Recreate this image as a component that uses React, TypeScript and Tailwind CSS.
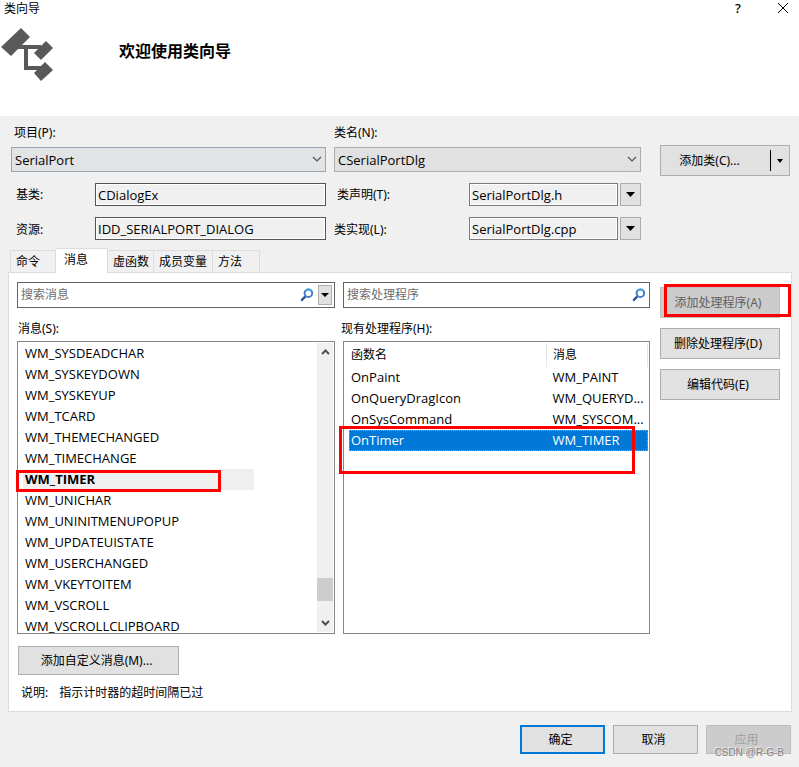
import { useState } from "react";
import type { ReactNode } from "react";

const MESSAGES = [
  "WM_SYSDEADCHAR",
  "WM_SYSKEYDOWN",
  "WM_SYSKEYUP",
  "WM_TCARD",
  "WM_THEMECHANGED",
  "WM_TIMECHANGE",
  "WM_TIMER",
  "WM_UNICHAR",
  "WM_UNINITMENUPOPUP",
  "WM_UPDATEUISTATE",
  "WM_USERCHANGED",
  "WM_VKEYTOITEM",
  "WM_VSCROLL",
  "WM_VSCROLLCLIPBOARD",
];

const HANDLERS = [
  { name: "OnPaint", message: "WM_PAINT" },
  { name: "OnQueryDragIcon", message: "WM_QUERYD..." },
  { name: "OnSysCommand", message: "WM_SYSCOM..." },
  { name: "OnTimer", message: "WM_TIMER" },
];

const TABS = [
  { label: "命令", width: "w-[46px]" },
  { label: "消息", width: "w-[52px]" },
  { label: "虚函数", width: "w-[46px]" },
  { label: "成员变量", width: "w-[59px]" },
  { label: "方法", width: "w-[47px]" },
];

function Triangle() {
  return (
    <svg width="9" height="5" viewBox="0 0 9 5" aria-hidden="true">
      <path d="M0 0h9L4.5 5z" fill="#000" />
    </svg>
  );
}

function SearchIcon() {
  return (
    <svg width="14" height="14" viewBox="0 0 14 14" fill="none" aria-hidden="true">
      <path d="M5.4 8.4 1.2 12.6" stroke="#2f4f96" strokeWidth="2.2" />
      <circle cx="8.4" cy="5.2" r="3.8" stroke="#3f7fc8" strokeWidth="2" />
      <path d="M5.4 2.9a3.8 3.8 0 0 1 6-.1" stroke="#4fa6da" strokeWidth="2" />
    </svg>
  );
}

function Logo() {
  return (
    <svg width="54" height="56" viewBox="0 0 54 56" fill="#58595b" aria-hidden="true">
      <path d="M21 0 30 9 11 28 1 19z" />
      <path d="M46 13 53 20 41 32 34 25z" />
      <path d="M45 34 53 42 41 53 34 45z" />
      <path d="M17 17h24v4H28v17h13v4H24V21h-7z" />
    </svg>
  );
}

function ComboBox({ id, value, className }: { id: string; value: string; className: string }) {
  return (
    <div className="relative mt-[6px]">
      <select
        id={id}
        defaultValue={value}
        className={`block h-[25px] w-full appearance-none border pl-[3px] font-['Open_Sans','Noto_Sans_CJK_SC',sans-serif] text-[13px] leading-4 outline-none ${className}`}
      >
        <option>{value}</option>
      </select>
      <svg
        className="pointer-events-none absolute top-[9px] right-1"
        width="10"
        height="7"
        viewBox="0 0 10 7"
        fill="none"
        stroke="#555"
        aria-hidden="true"
      >
        <path d="M1 1l4 4 4-4" strokeWidth="1.2" />
      </svg>
    </div>
  );
}

function ReadOnlyBox({ id, value, className }: { id: string; value: string; className: string }) {
  return (
    <input
      id={id}
      readOnly
      defaultValue={value}
      className={`h-[23px] min-w-0 border bg-[#f0f0f0] px-[2px] font-['Open_Sans','Noto_Sans_CJK_SC',sans-serif] text-[13px] leading-4 shadow-[inset_0_0_0_1px_#fff] outline-none ${className}`}
    />
  );
}

function DropButton({ label }: { label: string }) {
  return (
    <button
      type="button"
      aria-label={label}
      className="flex h-[23px] w-[21px] items-center justify-center border border-[#adadad] bg-[#e1e1e1]"
    >
      <Triangle />
    </button>
  );
}

function PushButton({
  children,
  className = "border border-[#adadad] bg-[#e1e1e1]",
  disabled,
}: {
  children: ReactNode;
  className?: string;
  disabled?: boolean;
}) {
  return (
    <button type="button" disabled={disabled} className={`flex items-center justify-center pr-1 leading-4 ${className}`}>
      {children}
    </button>
  );
}

function Mark({ className }: { className: string }) {
  return <div className={`pointer-events-none absolute border-[3px] border-[#fe0000] ${className}`} />;
}

export default function ClassWizard() {
  const [tab, setTab] = useState("消息");
  const [message, setMessage] = useState("WM_TIMER");
  const [handler, setHandler] = useState("OnTimer");

  return (
    <div className="min-h-screen bg-[#f0f0f0] font-['Noto_Sans','Noto_Sans_CJK_SC',sans-serif] text-xs leading-4 text-black">
      <header className="h-[116px] bg-white">
        <div className="flex h-4 items-center pr-[10px] pl-1">
          <span className="flex-1 pt-px">类向导</span>
          <button type="button" className="w-4 text-center text-[13px] font-medium leading-4">
            ?
          </button>
          <button type="button" aria-label="关闭" className="ml-[31px]">
            <svg width="12" height="12" viewBox="0 0 12 12" stroke="#000" aria-hidden="true">
              <path d="M1 1l10 10M11 1 1 11" />
            </svg>
          </button>
        </div>
        <div className="flex items-start pt-3">
          <Logo />
          <h1 className="mt-[11px] ml-[65px] text-base leading-6 font-bold">欢迎使用类向导</h1>
        </div>
      </header>

      <main>
        <section className="flex items-start pr-[9px] pl-[11px]">
          <div className="min-w-0 flex-[315] pt-[9px]">
            <label htmlFor="project" className="block pl-[3px]">
              项目(P):
            </label>
            <ComboBox id="project" value="SerialPort" className="border-[#98a5b3] bg-[#e1e3e5]" />
            <div className="mt-[11px] flex items-center">
              <label htmlFor="base" className="w-[84px] pt-px pl-[5px]">
                基类:
              </label>
              <ReadOnlyBox id="base" value="CDialogEx" className="flex-1 border-[#555]" />
            </div>
            <div className="mt-[11px] flex items-center">
              <label htmlFor="resource" className="w-[84px] pt-[2px] pl-[5px]">
                资源:
              </label>
              <ReadOnlyBox id="resource" value="IDD_SERIALPORT_DIALOG" className="flex-1 border-[#555]" />
            </div>
          </div>

          <div className="ml-2 min-w-0 flex-[307] pt-[9px]">
            <label htmlFor="class-name" className="block">
              类名(N):
            </label>
            <ComboBox id="class-name" value="CSerialPortDlg" className="border-[#adadad] bg-[#e1e1e1]" />
            <div className="mt-[11px] flex items-center">
              <label htmlFor="declaration" className="w-[135px] pt-px pl-[3px]">
                类声明(T):
              </label>
              <ReadOnlyBox id="declaration" value="SerialPortDlg.h" className="mr-[2px] flex-1 border-[#7a7a7a]" />
              <DropButton label="类声明" />
            </div>
            <div className="mt-[11px] flex items-center">
              <label htmlFor="implementation" className="w-[135px] pt-[2px]">
                类实现(L):
              </label>
              <ReadOnlyBox
                id="implementation"
                value="SerialPortDlg.cpp"
                className="mr-[2px] flex-1 border-[#7a7a7a]"
              />
              <DropButton label="类实现" />
            </div>
          </div>

          <div className="mt-[29px] ml-[19px] flex h-[31px] w-[130px] items-center border border-[#adadad] bg-[#e1e1e1]">
            <button type="button" className="h-full flex-1 pr-3 text-center">
              添加类(C)...
            </button>
            <button
              type="button"
              aria-label="更多添加类选项"
              className="flex h-[21px] w-[19px] items-center justify-center border-l border-black"
            >
              <svg width="6" height="4" viewBox="0 0 6 4" aria-hidden="true">
                <path d="M0 0h6L3 4z" />
              </svg>
            </button>
          </div>
        </section>

        <div role="tablist" className="mt-2 flex items-end pl-[10px]">
          {TABS.map((t) => (
            <button
              key={t.label}
              type="button"
              role="tab"
              aria-selected={tab === t.label}
              onClick={() => setTab(t.label)}
              className={`${t.width} border-t border-r border-[#dcdcdc] text-left whitespace-nowrap first:border-l ${
                tab === t.label
                  ? "relative z-10 -mb-px h-[25px] bg-white pb-[2px] pl-2"
                  : "h-[22px] pl-[5px]"
              }`}
            >
              {t.label}
            </button>
          ))}
        </div>

        <section className="mr-[7px] ml-2 border border-[#dcdcdc] bg-white pt-[9px] pr-[11px] pb-[10px] pl-2">
          <div className="flex items-start">
            <div className="min-w-0 flex-[318]">
              <div className="flex h-[26px] items-center border border-[#646464] pr-[2px] pl-[3px]">
                <input
                  aria-label="搜索消息"
                  placeholder="搜索消息"
                  className="min-w-0 flex-1 outline-none placeholder:text-[#6d6d6d]"
                />
                <SearchIcon />
                <button
                  type="button"
                  aria-label="搜索选项"
                  className="ml-1 flex h-5 w-[14px] items-center justify-center border border-[#adadad] bg-[#e1e1e1]"
                >
                  <svg width="8" height="4" viewBox="0 0 8 4" aria-hidden="true">
                    <path d="M0 0h8L4 4z" />
                  </svg>
                </button>
              </div>
              <h2 id="messages-label" className="mt-[13px] pl-px">
                消息(S):
              </h2>
              <div className="relative mt-1">
                <div className="flex h-[293px] border border-[#828790] pt-px">
                  <ul
                    role="listbox"
                    aria-labelledby="messages-label"
                    className="min-w-0 flex-1 overflow-hidden pl-[5px] font-['Open_Sans','Noto_Sans_CJK_SC',sans-serif] text-[13px]"
                  >
                    {MESSAGES.map((m) => (
                      <li
                        key={m}
                        role="option"
                        aria-selected={message === m}
                        onClick={() => setMessage(m)}
                        className={`h-[21px] w-[231px] pt-[3px] pl-[2px] leading-[14px] last:h-[17px] ${
                          message === m ? "bg-[#efefef] font-bold" : ""
                        }`}
                      >
                        {m}
                      </li>
                    ))}
                  </ul>
                  <div className="mr-px mb-px flex w-4 flex-col items-center bg-[#f0f0f0] py-[6px]">
                    <svg width="9" height="6" viewBox="0 0 9 6" fill="none" stroke="#505050" aria-hidden="true">
                      <path d="M1 5l3.500-3.500L8 5" strokeWidth="2" />
                    </svg>
                    <div className="flex-1" />
                    <div className="mb-[19px] h-[23px] w-full bg-[#cdcdcd]" />
                    <svg width="9" height="6" viewBox="0 0 9 6" fill="none" stroke="#505050" aria-hidden="true">
                      <path d="M1 1l3.500 3.500L8 1" strokeWidth="2" />
                    </svg>
                  </div>
                </div>
                <Mark className="top-[129px] -left-px h-[22px] w-[205px]" />
              </div>
            </div>

            <div className="ml-2 min-w-0 flex-[307]">
              <div className="flex h-[26px] items-center border border-[#646464] pr-[3px] pl-[3px]">
                <input
                  aria-label="搜索处理程序"
                  placeholder="搜索处理程序"
                  className="min-w-0 flex-1 outline-none placeholder:text-[#6d6d6d]"
                />
                <SearchIcon />
              </div>
              <h2 className="mt-[13px] -ml-[2px]">现有处理程序(H):</h2>
              <div className="relative mt-1">
                <div className="h-[293px] border border-[#828790] pt-px pr-px pl-[5px]">
                  <table className="w-full table-fixed border-collapse text-left">
                    <thead>
                      <tr className="h-6">
                        <th className="border-r border-[#e5e5e5] p-0 pl-[2px] font-normal">函数名</th>
                        <th className="w-[101px] border-r border-[#e5e5e5] p-0 pl-[6px] font-normal">消息</th>
                      </tr>
                    </thead>
                    <tbody className="font-['Open_Sans','Noto_Sans_CJK_SC',sans-serif] text-[13px]">
                      {HANDLERS.map((h) => (
                        <tr
                          key={h.name}
                          onClick={() => setHandler(h.name)}
                          className={`h-[21px] ${
                            handler === h.name
                              ? "bg-[#0078d7] text-white outline-1 -outline-offset-1 outline-[#ff8728] outline-dotted"
                              : ""
                          }`}
                        >
                          <td className="p-0 pb-px pl-[2px] leading-[18px]">{h.name}</td>
                          <td className="p-0 pb-px pl-[6px] leading-[18px] whitespace-nowrap">{h.message}</td>
                        </tr>
                      ))}
                    </tbody>
                  </table>
                </div>
                <Mark className="top-[85px] right-[15px] -left-1 h-12" />
              </div>
            </div>

            <div className="mt-[5px] ml-[10px] flex w-[120px] flex-col gap-[10px]">
              <div className="relative">
                <PushButton disabled className="h-[31px] w-full border border-[#bfbfbf] bg-[#cccccc] text-[#606060]">
                  添加处理程序(A)
                </PushButton>
                <Mark className="-top-[3px] -right-[11px] bottom-px left-1" />
              </div>
              <PushButton className="h-[31px] border border-[#adadad] bg-[#e1e1e1]">删除处理程序(D)</PushButton>
              <PushButton className="h-[31px] border border-[#adadad] bg-[#e1e1e1]">编辑代码(E)</PushButton>
            </div>
          </div>

          <div className="mt-3 pl-px">
            <PushButton className="h-[29px] w-[161px] border border-[#adadad] bg-[#e1e1e1]">
              添加自定义消息(M)...
            </PushButton>
          </div>
          <p className="mt-[10px] flex gap-[11px] pl-1">
            <span>说明:</span>
            <span>指示计时器的超时间隔已过</span>
          </p>
        </section>
      </main>

      <footer className="relative mt-[13px] flex justify-end gap-2 pr-2 pb-[13px]">
        <PushButton className="h-[29px] w-[85px] border-2 border-[#0078d7] bg-[#e1e1e1]">确定</PushButton>
        <PushButton className="h-[29px] w-[85px] border border-[#adadad] bg-[#e1e1e1]">取消</PushButton>
        <PushButton disabled className="h-[29px] w-[85px] border border-[#bfbfbf] bg-[#cccccc] text-[#a0a0a0]">
          应用
        </PushButton>
        <span className="pointer-events-none absolute right-[15px] bottom-[6px] font-['Liberation_Sans',sans-serif] text-[10px] leading-4 text-[#858585] [text-shadow:-1px_-1px_0_#ececec]">
          CSDN @R-G-B
        </span>
      </footer>
    </div>
  );
}
